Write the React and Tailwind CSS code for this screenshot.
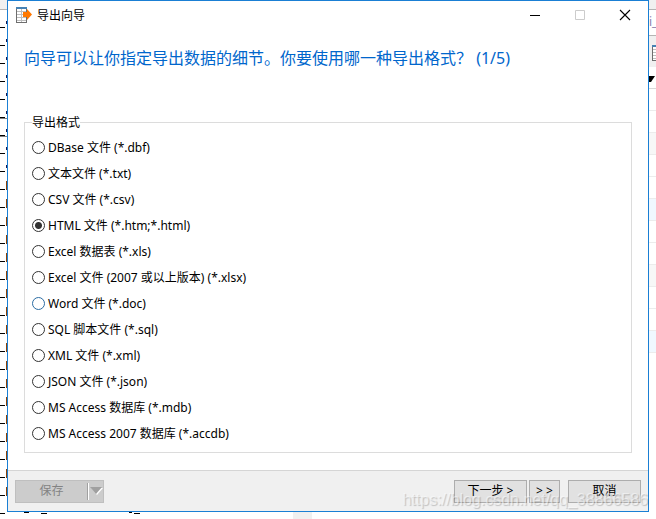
import { useState } from 'react'

const formats = [
  { id: 'dbf', label: 'DBase 文件 (*.dbf)' },
  { id: 'txt', label: '文本文件 (*.txt)' },
  { id: 'csv', label: 'CSV 文件 (*.csv)' },
  { id: 'html', label: 'HTML 文件 (*.htm;*.html)' },
  { id: 'xls', label: 'Excel 数据表 (*.xls)' },
  { id: 'xlsx', label: 'Excel 文件 (2007 或以上版本) (*.xlsx)' },
  { id: 'doc', label: 'Word 文件 (*.doc)' },
  { id: 'sql', label: 'SQL 脚本文件 (*.sql)' },
  { id: 'xml', label: 'XML 文件 (*.xml)' },
  { id: 'json', label: 'JSON 文件 (*.json)' },
  { id: 'mdb', label: 'MS Access 数据库 (*.mdb)' },
  { id: 'accdb', label: 'MS Access 2007 数据库 (*.accdb)' },
]

const gridRows = [
  'bg-white', 'bg-white', 'bg-[#f7f7f7]',
  'bg-white', 'bg-white', 'bg-[#f0f8ff]',
  'bg-white', 'bg-white', 'bg-[#f7f7f7]',
  'bg-white', 'bg-white', 'bg-[#f0f8ff]',
]

function ExportIcon() {
  return (
    <svg viewBox="0 0 16 16" className="h-4 w-4 shrink-0" shapeRendering="crispEdges" aria-hidden="true">
      <rect x="0" y="0" width="11" height="16" fill="#6e6e6e" />
      <rect x="1" y="2" width="9" height="13" fill="#ffffff" />
      <rect x="0" y="0" width="11" height="2" fill="#4682b4" />
      <path d="M1 4.5h9M1 7.5h9M1 10.5h9M1 13.5h9" stroke="#bebebe" />
      <path d="M5.5 2v13" stroke="#bebebe" />
      <path d="M7 5h4V2l5 5.5-5 5.5v-3H7z" fill="#ff7800" shapeRendering="auto" />
    </svg>
  )
}

// Edge of the table list that shows to the left of the dialog
function LeftEdge() {
  return (
    <div className="w-[7px] shrink-0 overflow-hidden bg-white" aria-hidden="true">
      <div className="h-[10px] border-b border-[#b4b4b4] bg-[#f0f0f0]" />
      {Array.from({ length: 27 }, (_, i) => (
        <div key={i} className={`flex h-[18px] items-end justify-between ${i === 6 || i === 7 ? 'border-t border-[#808080]' : ''}`}>
          <div className="h-px w-[5px] bg-black" />
          {i < 9
            ? <div className="mb-1 h-[3px] w-px bg-[#1a1a50]" />
            : <div className="h-[9px] w-px bg-[#8a4208]" />}
        </div>
      ))}
    </div>
  )
}

// Edge of the main window that shows to the right of the dialog
function RightEdge() {
  return (
    <div className="w-[7px] shrink-0 overflow-hidden bg-white" aria-hidden="true">
      <div className="h-[10px] border-b border-[#b4b4b4] bg-[#f0f0f0]" />
      <div className="h-[26px] border-b border-[#b4b4b4] text-xs leading-6 text-[#8a80b0]">i_</div>
      <div className="h-[31px] bg-[#f0f0f0] pt-[9px] pl-[3px]">
        <ExportIcon />
      </div>
      <div className="h-[22px] border-b border-[#d9d9d9] pt-[9px]">
        <svg viewBox="0 0 6 6" className="h-[6px] w-[6px]"><path d="M0 0h6L2 6H0z" /></svg>
      </div>
      {gridRows.map((color, i) => (
        <div key={i} className={`h-[22px] border-b border-[#ececec] ${color}`} />
      ))}
    </div>
  )
}

function BottomEdge() {
  return (
    <div className="flex h-[7px] items-start bg-white" aria-hidden="true">
      <div className="mt-px h-px w-[5px] bg-black" />
      <div className="ml-[19px] h-px w-[5px] bg-black" />
      <div className="mt-px ml-3 h-px w-[6px] bg-black" />
      <div className="ml-[82px] h-px w-[3px] bg-black" />
      <div className="mt-px ml-[2px] h-px w-[6px] bg-black" />
      <div className="ml-[153px] h-[7px] w-[19px] bg-[#f0f0f0]" />
    </div>
  )
}

function TitleBar() {
  return (
    <header className="flex h-7 items-center pr-px pl-2">
      <ExportIcon />
      <h1 className="ml-[5px] flex-1 pt-[2px] text-xs text-black">导出向导</h1>
      <button type="button" aria-label="最小化" className="flex h-7 w-[45px] items-center justify-center">
        <svg viewBox="0 0 12 12" className="h-3 w-3" stroke="#000"><path d="M1 6.5h10" /></svg>
      </button>
      <button type="button" aria-label="最大化" disabled className="flex h-7 w-[45px] items-center justify-center">
        <svg viewBox="0 0 12 12" className="h-3 w-3" fill="none" stroke="#ccc"><path d="M1.5 1.5h9v9h-9z" /></svg>
      </button>
      <button type="button" aria-label="关闭" className="flex h-7 w-[45px] items-center justify-center">
        <svg viewBox="0 0 12 12" className="h-3 w-3" fill="none" stroke="#000" strokeWidth="1.1"><path d="M1 1l10 10M11 1L1 11" /></svg>
      </button>
    </header>
  )
}

function FormatOption({ format, checked, onChange }) {
  return (
    <label className="flex h-[26px] items-center gap-[3px]">
      <input
        type="radio"
        name="format"
        value={format.id}
        checked={checked}
        onChange={onChange}
        className={`h-[13px] w-[13px] shrink-0 appearance-none rounded-full border bg-white checked:bg-[radial-gradient(circle,#333_3px,#fff_4px)] ${format.id === 'doc' ? 'border-[#2b6ca3]' : 'border-[#333]'}`}
      />
      <span className="pt-[2px]">{format.label}</span>
    </label>
  )
}

function App() {
  const [selected, setSelected] = useState('html')

  return (
    <div className="flex min-h-screen flex-col overflow-hidden bg-white font-['Noto_Sans','Noto_Sans_CJK_SC',sans-serif] text-xs text-black">
      <div className="flex">
        <LeftEdge />
        <main className="flex min-w-0 flex-1 flex-col border border-[#1a7fd4] bg-white">
          <TitleBar />
          <h2 className="mt-[17px] px-4 text-base leading-6 text-[#0066cc]">
            向导可以让你指定导出数据的细节。你要使用哪一种导出格式？ (1/5)
          </h2>
          <fieldset className="mx-4 mt-11 mb-[17px] border border-[#dcdcdc] px-[7px] pb-[6px]">
            <legend className="pt-px leading-4">导出格式</legend>
            <div className="pt-[3px]">
              {formats.map(format => (
                <FormatOption
                  key={format.id}
                  format={format}
                  checked={selected === format.id}
                  onChange={() => setSelected(format.id)}
                />
              ))}
            </div>
          </fieldset>
          <footer className="relative flex h-[41px] items-center border-t border-[#d5d5d5] bg-[#f0f0f0] px-[7px]">
            <button type="button" disabled className="flex h-[23px] w-[89px] items-center border border-[#bfbfbf] bg-[#cccccc] text-[#838383]">
              <span className="flex-1">保存</span>
              <span className="h-[17px] w-[2px] border-l border-[#a0a0a0] bg-white" />
              <svg viewBox="0 0 14 8" className="h-2 w-[14px]">
                <path d="M2 1h12L8 8z" fill="#fff" />
                <path d="M1 0h12L7 7z" fill="#a0a0a0" />
              </svg>
            </button>
            <button type="button" className="ml-auto h-[23px] w-[73px] border border-[#adadad] bg-[#e1e1e1]">下一步 &gt;</button>
            <button type="button" className="ml-[2px] h-[23px] w-[31px] border border-[#adadad] bg-[#e1e1e1]">&gt; &gt;</button>
            <button type="button" className="ml-2 h-[23px] w-[73px] border border-[#adadad] bg-[#e1e1e1]">取消</button>
            <span className="pointer-events-none absolute right-0 bottom-px font-['Liberation_Sans',sans-serif] text-base leading-5 text-white/50 [text-shadow:1px_1px_1px_#0003]">
              https://blog.csdn.net/qq_38866586
            </span>
          </footer>
        </main>
        <RightEdge />
      </div>
      <BottomEdge />
    </div>
  )
}

export default App
